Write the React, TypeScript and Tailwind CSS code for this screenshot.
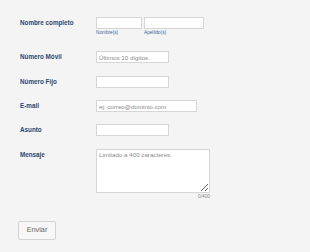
import React from "react";

const labelCls =
  "w-[76px] shrink-0 text-[6.3px] font-bold leading-[12px] text-[#2b4670]";
const inputCls =
  "h-[12px] border border-[#d6d6d6] bg-white px-[2px] text-[6.2px] text-[#555] placeholder:text-[#8a8a8a] outline-none";

export default function App() {
  return (
    <div
      className="w-[310px] h-[252px] bg-[#f4f4f4] pl-[20px] pt-[17px]"
      style={{ fontFamily: '"Liberation Sans", Arial, sans-serif' }}
    >
      {/* Nombre completo */}
      <div className="flex">
        <div className={labelCls}>Nombre completo</div>
        <div className="flex gap-[2px]">
          <div className="flex flex-col">
            <input className={`${inputCls} w-[46px]`} />
            <span className="mt-[1px] text-[4.7px] leading-[6px] text-[#3b679c]">
              Nombre(s)
            </span>
          </div>
          <div className="flex flex-col">
            <input className={`${inputCls} w-[60px]`} />
            <span className="mt-[1px] text-[4.7px] leading-[6px] text-[#3b679c]">
              Apellido(s)
            </span>
          </div>
        </div>
      </div>

      {/* Número Móvil */}
      <div className="mt-[15px] flex">
        <div className={labelCls}>Número Móvil</div>
        <input className={`${inputCls} w-[73px]`} placeholder="Últimos 10 dígitos." />
      </div>

      {/* Número Fijo */}
      <div className="mt-[13px] flex">
        <div className={labelCls}>Número Fijo</div>
        <input className={`${inputCls} w-[73px]`} />
      </div>

      {/* E-mail */}
      <div className="mt-[12px] flex">
        <div className={labelCls}>E-mail</div>
        <input className={`${inputCls} w-[101px]`} placeholder="ej: correo@dominio.com" />
      </div>

      {/* Asunto */}
      <div className="mt-[12px] flex">
        <div className={labelCls}>Asunto</div>
        <input className={`${inputCls} w-[73px]`} />
      </div>

      {/* Mensaje */}
      <div className="mt-[13px] flex">
        <div className={labelCls}>Mensaje</div>
        <div className="flex flex-col items-end">
          <textarea
            className="block h-[44px] w-[114px] border border-[#d6d6d6] bg-white px-[2px] py-[1px] text-[6.2px] leading-[8px] text-[#555] placeholder:text-[#8a8a8a] outline-none"
            placeholder="Limitado a 400 caracteres."
          />
          <span className="mt-[1px] text-[4.8px] leading-[6px] text-[#8a8a8a]">0/400</span>
        </div>
      </div>

      {/* Enviar */}
      <button className="mt-[21px] -ml-[2px] h-[19px] w-[38px] rounded-[2px] border border-[#d2d2d2] bg-[#f7f7f7] text-[7.3px] text-[#666]">
        Enviar
      </button>
    </div>
  );
}
